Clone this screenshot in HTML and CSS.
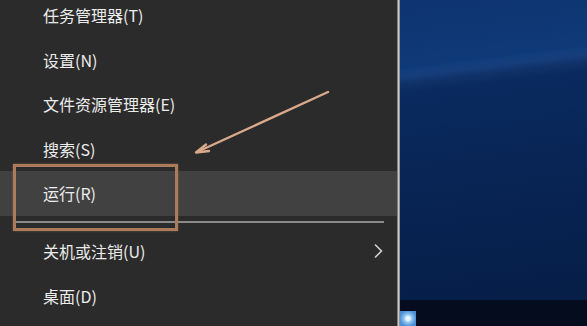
FILE: index.html
```html
<!DOCTYPE html>
<html lang="zh-CN">
<head>
<meta charset="utf-8">
<link rel="stylesheet" href="styles.css">
</head>
<body>
<div class="screen">
  <nav class="menu">
    <div class="list">
      <div class="item">任务管理器(T)</div>
      <div class="item">设置(N)</div>
      <div class="item">文件资源管理器(E)</div>
      <div class="item">搜索(S)</div>
      <div class="item active">运行(R)</div>
      <div class="sep"></div>
      <div class="item has-sub">关机或注销(U)
        <svg class="chev" width="10" height="16" viewBox="0 0 10 16"><path d="M2 1.5 L8.5 8 L2 14.5" fill="none" stroke="#cfcfcf" stroke-width="1.6"/></svg>
      </div>
      <div class="item">桌面(D)</div>
    </div>
  </nav>
  <div class="edge"></div>
  <div class="desktop">
    <div class="wall"></div>
    <div class="taskbar"><span class="tray"></span></div>
  </div>
  <div class="callout"></div>
  <svg class="arrow" width="587" height="326" viewBox="0 0 587 326">
    <path d="M328 92 L197 152" stroke="#d9a98c" stroke-width="2.4" stroke-linecap="round" fill="none"/>
    <path d="M206 144.5 L196 152.5 L209 151" stroke="#d9a98c" stroke-width="2.4" stroke-linecap="round" stroke-linejoin="round" fill="none"/>
  </svg>
</div>
</body>
</html>
```

FILE: styles.css
```css
html, body {
  margin: 0;
  padding: 0;
  background: #2b2b2b;
}
.screen {
  position: relative;
  width: 587px;
  height: 326px;
  overflow: hidden;
  display: flex;
  font-family: "Noto Sans CJK SC", "Noto Sans", sans-serif;
}
.menu {
  width: 397px;
  background: #2b2b2b;
  flex: none;
}
.list {
  margin-top: -7px;
  display: flex;
  flex-direction: column;
}
.item {
  height: 44.5px;
  display: flex;
  align-items: center;
  padding-left: 43px;
  padding-right: 14px;
  color: #ececec;
  font-size: 16px;
}
.item.active {
  background: #414141;
}
.item.has-sub {
  justify-content: space-between;
}
.sep {
  height: 13.5px;
  display: flex;
  align-items: center;
  padding: 0 13px 0 15px;
}
.sep::before {
  content: "";
  flex: 1;
  height: 2px;
  background: #8a8a8a;
  margin-top: -1px;
}
.edge {
  width: 3px;
  flex: none;
  background: linear-gradient(to right, #5a5a5a, #c9c9c9 50%, #7a7a7a);
}
.desktop {
  flex: 1;
  display: flex;
  flex-direction: column;
}
.wall {
  flex: 1;
  background:
    linear-gradient(173deg, rgba(0,0,0,0) 0 21%, rgba(80,130,210,0.14) 24%, rgba(0,0,0,0) 29%),
    linear-gradient(173deg, #0d3470 0%, #0f3a78 22%, #0a2b60 26%, #082555 55%, #061e48 100%);
}
.taskbar {
  height: 26px;
  background: #050c1e;
  display: flex;
  align-items: flex-end;
}
.tray {
  width: 16px;
  height: 15px;
  background: radial-gradient(circle at 50% 50%, #e6f4ff 0 2px, #8fc6f2 4px, #4d8fd6 8px);
}
.callout {
  position: absolute;
  left: 13px;
  top: 164px;
  width: 159px;
  height: 61px;
  border: 3px solid #ab7b5c;
  box-shadow: 0 0 2px rgba(171,123,92,0.6);
}
.arrow {
  position: absolute;
  left: 0;
  top: 0;
  pointer-events: none;
}
```
